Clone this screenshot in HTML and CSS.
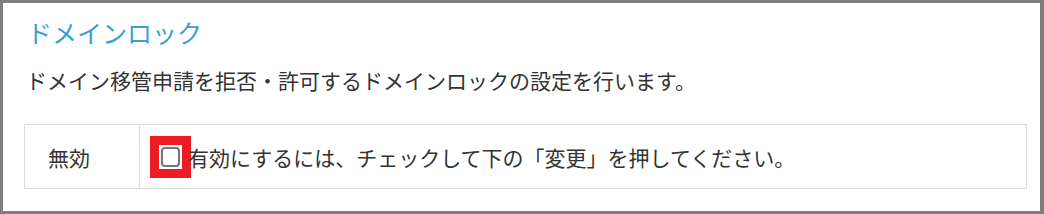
FILE: index.html
```html
<!DOCTYPE html>
<html lang="ja">
<head>
    <meta charset="UTF-8">
    <title>ドメインロック</title>
    <link rel="stylesheet" href="styles.css">
</head>
<body>
    <div class="panel">
        <h2 class="panel-title">ドメインロック</h2>
        <p class="panel-desc">ドメイン移管申請を拒否・許可するドメインロックの設定を行います。</p>
        <table class="setting-table">
            <tr>
                <th>無効</th>
                <td>
                    <label class="lock-label">
                        <span class="highlight"><input type="checkbox" name="domainlock"></span>有効にするには、チェックして下の「変更」を押してください。
                    </label>
                </td>
            </tr>
        </table>
    </div>
</body>
</html>
```

FILE: styles.css
```css
html, body {
    margin: 0;
    padding: 0;
}

body {
    font-family: "Noto Sans CJK JP", "Noto Sans", sans-serif;
    color: #333;
    background: #fff;
}

.panel {
    box-sizing: border-box;
    width: 1044px;
    height: 214px;
    border-style: solid;
    border-color: #7f7f7f;
    border-width: 3px 4px 3px 3px;
    padding: 12px 13px 0 21px;
}

.panel-title {
    margin: 0;
    font-size: 25px;
    font-weight: normal;
    line-height: 34px;
    color: #3a9fd6;
    padding-left: 3px;
}

.panel-desc {
    margin: 16px 0 0 0;
    font-size: 21px;
    line-height: 30px;
    padding-left: 2px;
}

.setting-table {
    margin-top: 29px;
    width: 1003px;
    border-collapse: collapse;
    border: 1px solid #dcdcdc;
}

.setting-table th,
.setting-table td {
    height: 63px;
    padding: 0;
    font-size: 21px;
    font-weight: normal;
    text-align: left;
    vertical-align: middle;
}

.setting-table th {
    width: 115px;
    padding-left: 23px;
    box-sizing: border-box;
    border-right: 1px solid #dcdcdc;
}

.setting-table td {
    padding-left: 10px;
}

.lock-label {
    display: flex;
    align-items: center;
}

.highlight {
    display: inline-flex;
    align-items: center;
    justify-content: center;
    box-sizing: border-box;
    width: 41px;
    height: 42px;
    margin-right: -3px;
    border: 9px solid #ed1c24;
}

.highlight input {
    margin: 0;
    width: 19px;
    height: 20px;
    appearance: none;
    border: 2px solid #777;
    border-radius: 4px;
    background: #fff;
}
```
